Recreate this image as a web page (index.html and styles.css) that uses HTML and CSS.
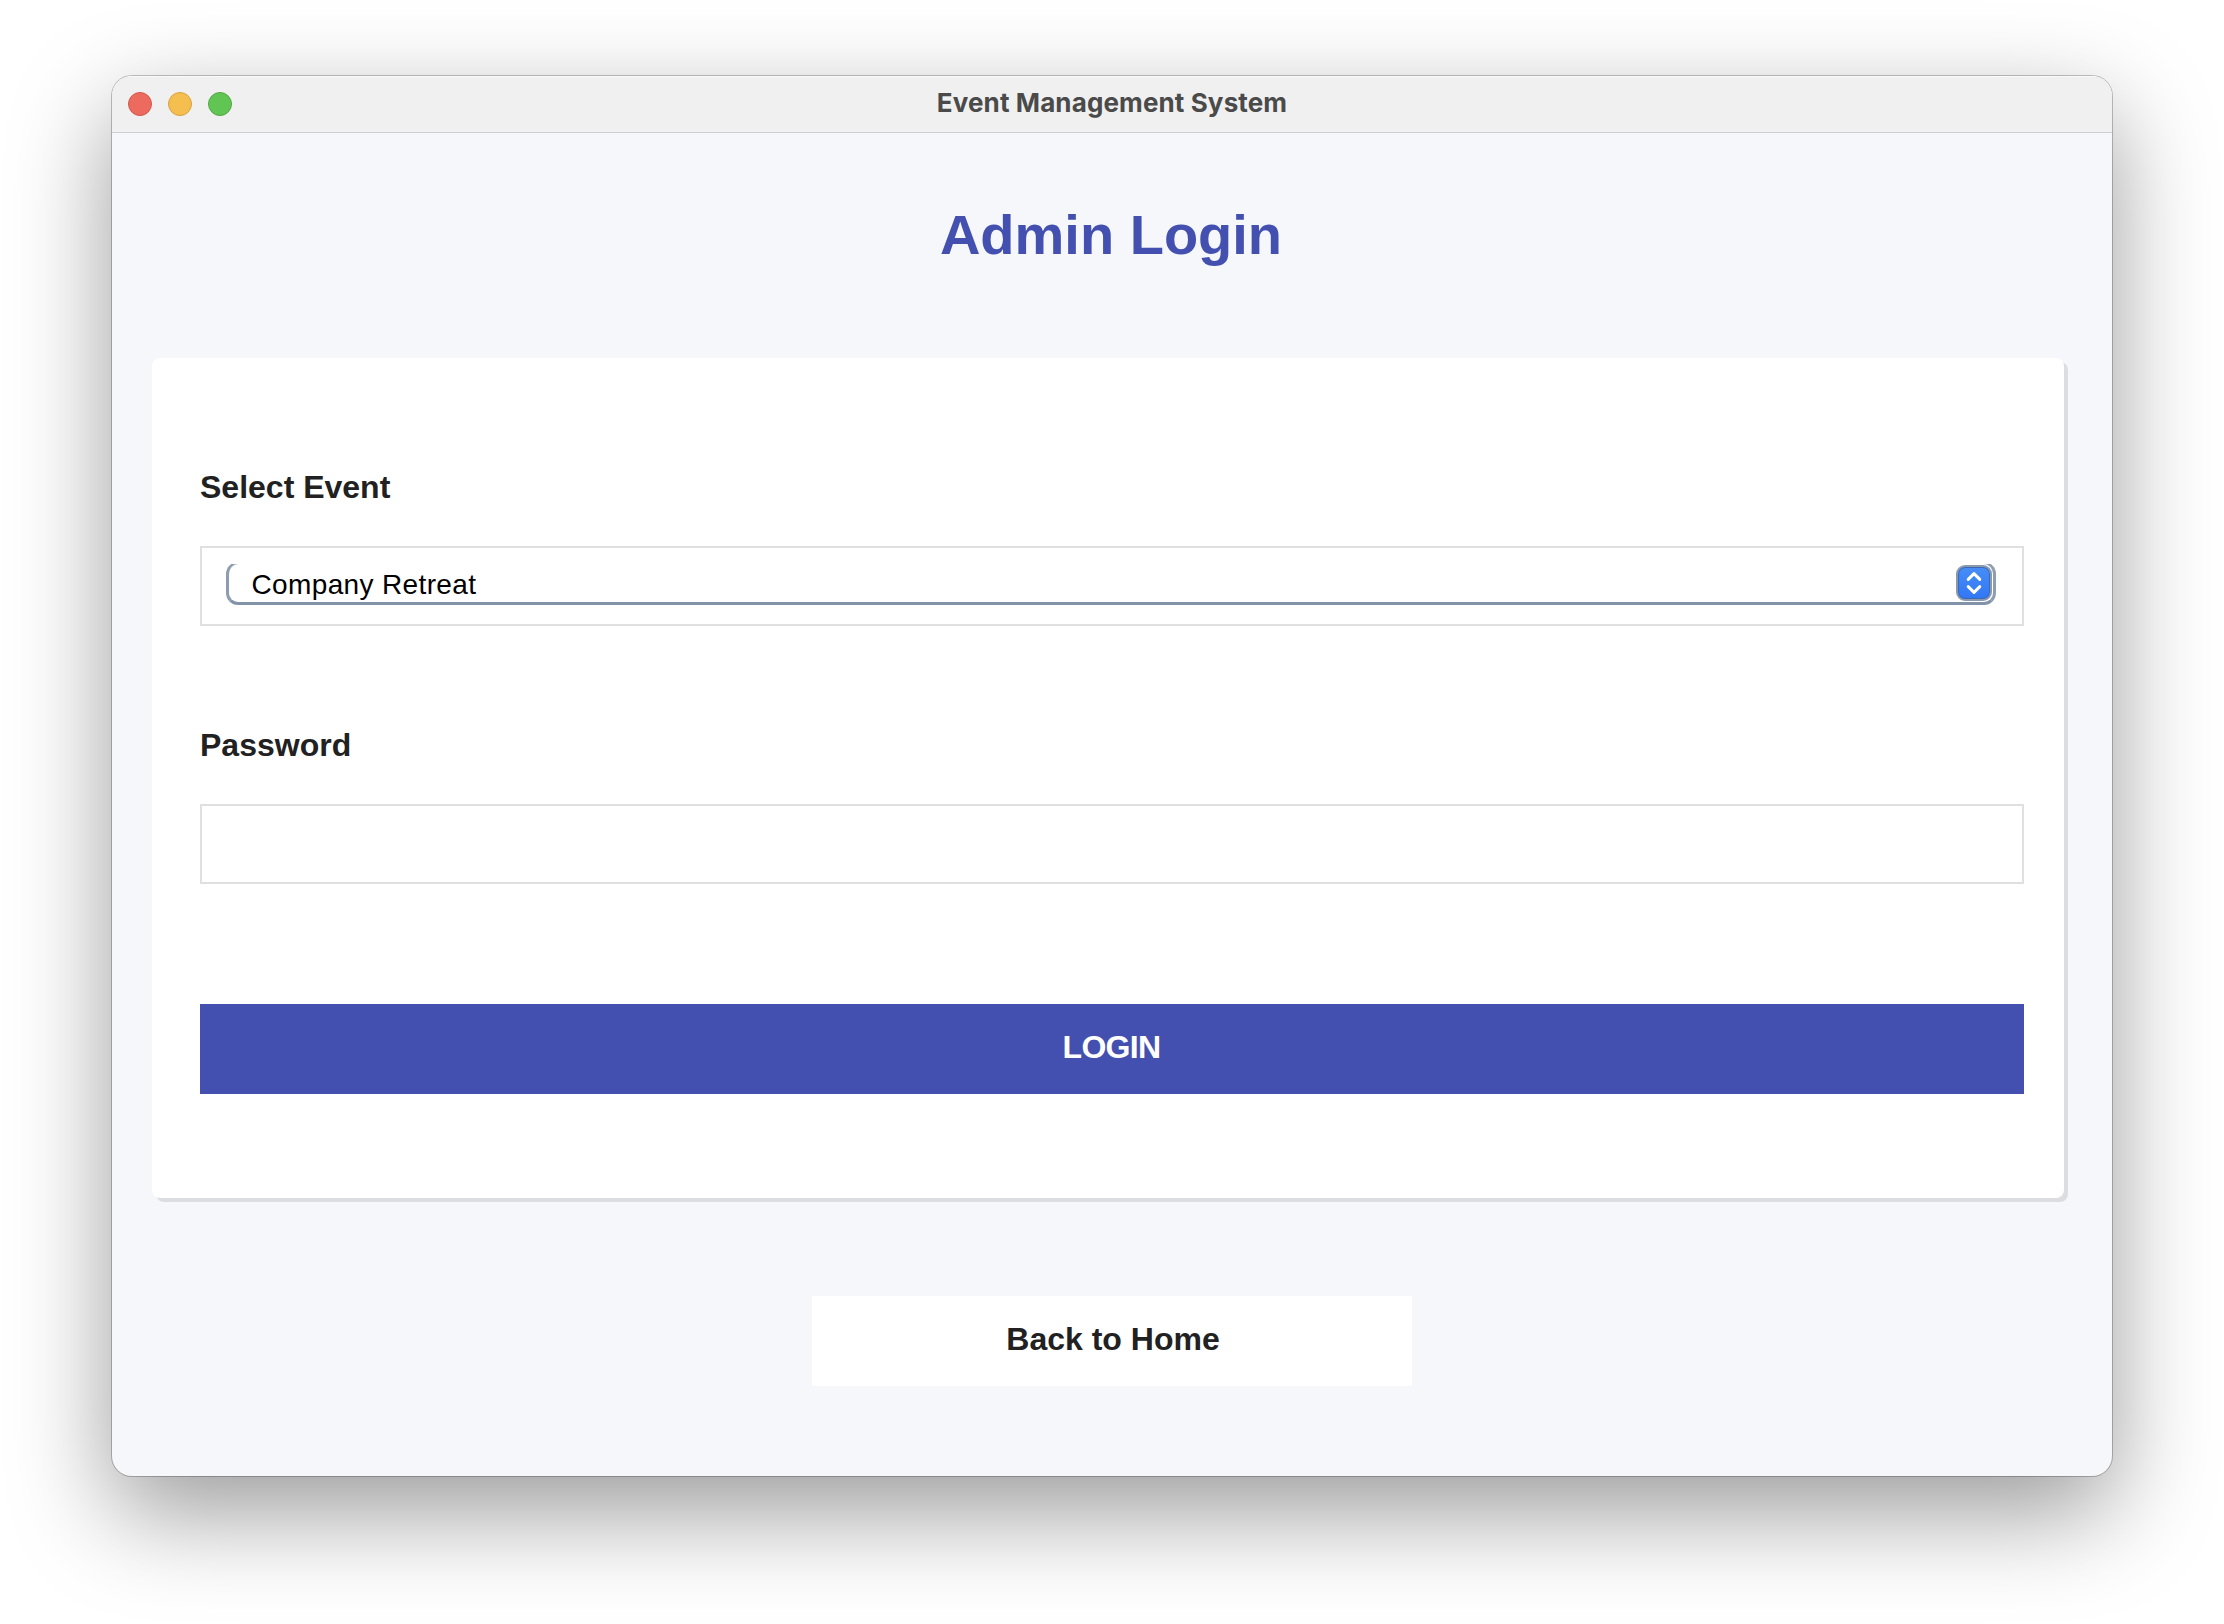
FILE: index.html
```html
<!DOCTYPE html>
<html lang="en">
<head>
<meta charset="utf-8">
<title>Event Management System</title>
<link rel="stylesheet" href="styles.css">
</head>
<body>
<div class="window">
  <header class="titlebar">
    <div class="lights">
      <span class="light close"></span>
      <span class="light minimize"></span>
      <span class="light maximize"></span>
    </div>
    <span class="window-title">Event Management System</span>
  </header>
  <main class="content">
    <h1 class="heading">Admin Login</h1>
    <form class="card">
      <label class="label">Select Event</label>
      <div class="field">
        <div class="combo">
          <span class="combo-text">Company Retreat</span>
          <span class="stepper">
            <svg width="32" height="32" viewBox="0 0 32 32" fill="none" stroke="#fff" stroke-width="2.9" stroke-linecap="round" stroke-linejoin="round">
              <path d="M10.2 12.4 16 6.6l5.8 5.8M10.2 19.6l5.8 5.8 5.8-5.8"/>
            </svg>
          </span>
        </div>
      </div>
      <label class="label" for="password">Password</label>
      <input class="field password" id="password" type="password">
      <button class="login" type="button">LOGIN</button>
    </form>
    <button class="back" type="button">Back to Home</button>
  </main>
</div>
</body>
</html>
```

FILE: styles.css
```css
* {
  box-sizing: border-box;
}

body {
  margin: 0;
  height: 1624px;
  padding: 76px 112px 0;
  background: #fff;
  overflow: hidden;
  font-family: "Liberation Sans", Arial, sans-serif;
}

.window {
  width: 2000px;
  height: 1400px;
  border-radius: 20px;
  background: #f5f7fb;
  overflow: hidden;
  box-shadow: 0 0 0 1px rgba(0, 0, 0, 0.23), 0 36px 100px rgba(0, 0, 0, 0.4);
}

.titlebar {
  display: grid;
  grid-template-columns: 1fr auto 1fr;
  align-items: center;
  height: 57px;
  padding: 0 16px;
  background: #f0f0f0;
  border-bottom: 1px solid #cfcfd2;
  box-shadow: inset 0 1px #fafafa;
}

.lights {
  display: flex;
  gap: 16px;
}

.light {
  width: 24px;
  height: 24px;
  border-radius: 50%;
  border: 1px solid;
}

.close {
  background: #ec6a5e;
  border-color: #d3574b;
}

.minimize {
  background: #f4bf4f;
  border-color: #d8a140;
}

.maximize {
  background: #61c554;
  border-color: #52a842;
}

.window-title {
  font: 700 26px/32px Inter, sans-serif;
  letter-spacing: 0.12px;
  color: #4a4a4a;
  padding-bottom: 2px;
}

.content {
  display: flex;
  flex-direction: column;
  padding: 69px 48px 0 40px;
}

.heading {
  margin: 0 -6px 0 0;
  font-size: 56px;
  line-height: 66px;
  text-align: center;
  color: #4350af;
}

.card {
  display: flex;
  flex-direction: column;
  width: 1912px;
  height: 840px;
  margin-top: 90px;
  padding: 110px 40px 0 48px;
  border-radius: 8px;
  background: #fff;
  box-shadow: 4px 4px #dcdde0;
}

.label {
  font-size: 32px;
  font-weight: 700;
  line-height: 38px;
  color: #212121;
}

.field {
  height: 80px;
  margin: 40px 0 100px;
  padding: 14px 26px 0 24px;
  border: 2px solid #e0e0e0;
  background: #fff;
}

/* The top edge is cut off, leaving only the start of the corner curves. */
.combo {
  display: flex;
  justify-content: space-between;
  height: 43px;
  padding-left: 22.5px;
  border: 3px solid #8f9db1;
  border-top-width: 2px;
  border-bottom-color: #8292a8;
  border-radius: 12px;
  clip-path: inset(2px 0 0);
}

.combo-text {
  font-size: 28px;
  line-height: 42px;
  letter-spacing: 0.36px;
  color: #000;
}

.stepper {
  width: 36px;
  height: 36px;
  margin: 1px 1px 0 0;
  border: 2px solid #8b99af;
  border-radius: 9px;
  background: linear-gradient(#478ef7, #3176f6);
  box-shadow: inset 0 0 0 1px #3c68b4;
}

.stepper svg {
  display: block;
}

.password {
  margin-bottom: 0;
  outline: 0;
}

.login,
.back {
  height: 90px;
  padding: 0 0 5px;
  border: 0;
  font: 700 32px/36px "Liberation Sans", Arial, sans-serif;
}

.login {
  margin-top: 120px;
  padding-right: 1px;
  letter-spacing: -0.7px;
  background: #4350af;
  color: #fff;
}

.back {
  width: 600px;
  margin: 98px 0 0 660px;
  padding-left: 2px;
  background: #fff;
  color: #212121;
}
```
